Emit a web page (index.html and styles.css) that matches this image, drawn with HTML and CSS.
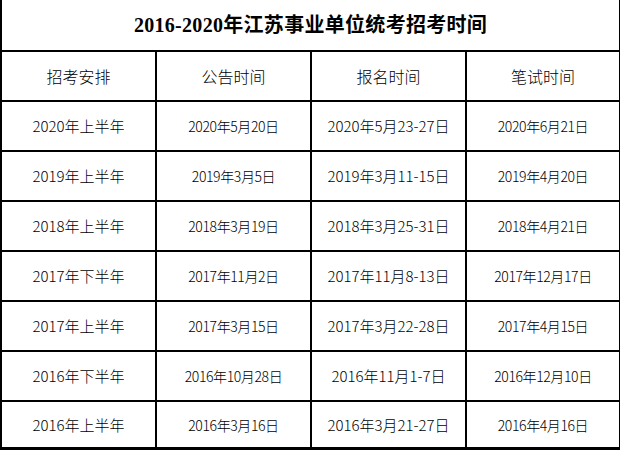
FILE: index.html
```html
<!DOCTYPE html>
<html lang="zh-CN">
<head>
<meta charset="utf-8">
<title>2016-2020年江苏事业单位统考招考时间</title>
<link rel="stylesheet" href="styles.css">
</head>
<body>
<table class="schedule">
  <colgroup>
    <col class="c1"><col class="c2"><col class="c3"><col class="c4">
  </colgroup>
  <thead>
    <tr class="title-row"><th colspan="4" class="title">2016-2020年江苏事业单位统考招考时间</th></tr>
    <tr class="head-row"><th>招考安排</th><th>公告时间</th><th>报名时间</th><th>笔试时间</th></tr>
  </thead>
  <tbody>
    <tr><td>2020年上半年</td><td class="tight">2020年5月20日</td><td>2020年5月23-27日</td><td class="tight">2020年6月21日</td></tr>
    <tr><td>2019年上半年</td><td class="tight">2019年3月5日</td><td>2019年3月11-15日</td><td class="tight">2019年4月20日</td></tr>
    <tr><td>2018年上半年</td><td class="tight">2018年3月19日</td><td>2018年3月25-31日</td><td class="tight">2018年4月21日</td></tr>
    <tr><td>2017年下半年</td><td class="tight">2017年11月2日</td><td>2017年11月8-13日</td><td class="tight">2017年12月17日</td></tr>
    <tr><td>2017年上半年</td><td class="tight">2017年3月15日</td><td>2017年3月22-28日</td><td class="tight">2017年4月15日</td></tr>
    <tr><td>2016年下半年</td><td class="tight">2016年10月28日</td><td>2016年11月1-7日</td><td class="tight">2016年12月10日</td></tr>
    <tr class="last"><td>2016年上半年</td><td class="tight">2016年3月16日</td><td>2016年3月21-27日</td><td class="tight">2016年4月16日</td></tr>
  </tbody>
</table>
</body>
</html>
```
FILE: styles.css
```css
html, body {
  margin: 0;
  padding: 0;
  background: #fff;
}
.schedule {
  border-collapse: collapse;
  table-layout: fixed;
  width: 619px;
  color: #000;
  font-family: "Noto Sans CJK SC", "Noto Sans", sans-serif;
}
.c1, .c2, .c3 { width: 155px; }
.c4 { width: 154px; }
.schedule th,
.schedule td {
  border: 2px solid #000;
  height: 48px;
  padding: 0;
  text-align: center;
  vertical-align: middle;
  font-size: 15px;
  font-weight: 300;
  line-height: 20px;
}
.schedule .title-row th {
  border-top: none;
  height: 50px;
}
.schedule .title {
  font-family: "Liberation Serif", "Noto Sans CJK SC", serif;
  font-weight: 700;
  font-size: 20px;
  letter-spacing: 0.3px;
}
.schedule .head-row th {
  font-size: 16px;
}
.schedule td.tight {
  font-size: 14px;
  letter-spacing: -0.4px;
}
.schedule .last td {
  border-bottom-width: 3px;
  height: 45px;
}
```
